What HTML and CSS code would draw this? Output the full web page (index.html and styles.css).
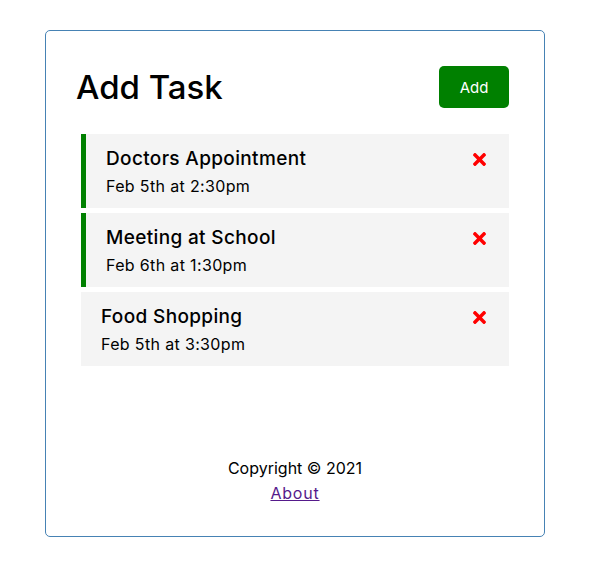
FILE: index.html
```html
<!DOCTYPE html>
<html lang="en">
<head>
<meta charset="utf-8">
<title>Task Tracker</title>
<link rel="stylesheet" href="styles.css">
</head>
<body>
<div class="container">
  <header class="header">
    <h1>Add Task</h1>
    <button class="btn">Add</button>
  </header>
  <div class="tasks">
    <div class="task reminder">
      <h3>Doctors Appointment <svg class="del" viewBox="0 0 352 512"><path d="M242.72 256l100.07-100.07c12.28-12.28 12.28-32.19 0-44.48l-22.24-22.24c-12.28-12.28-32.19-12.28-44.48 0L176 189.28 75.930 89.21c-12.28-12.28-32.19-12.28-44.48 0L9.21 111.45c-12.28 12.28-12.28 32.19 0 44.48L109.28 256 9.21 356.07c-12.28 12.28-12.28 32.19 0 44.48l22.24 22.24c12.28 12.28 32.2 12.28 44.48 0L176 322.72l100.07 100.07c12.28 12.28 32.2 12.28 44.48 0l22.24-22.24c12.28-12.28 12.28-32.19 0-44.48L242.72 256z"/></svg></h3>
      <p>Feb 5th at 2:30pm</p>
    </div>
    <div class="task reminder">
      <h3>Meeting at School <svg class="del" viewBox="0 0 352 512"><path d="M242.72 256l100.07-100.07c12.28-12.28 12.28-32.19 0-44.48l-22.24-22.24c-12.28-12.28-32.19-12.28-44.48 0L176 189.28 75.930 89.21c-12.28-12.28-32.19-12.28-44.48 0L9.21 111.45c-12.28 12.28-12.28 32.19 0 44.48L109.28 256 9.21 356.07c-12.28 12.28-12.28 32.19 0 44.48l22.24 22.24c12.28 12.28 32.2 12.28 44.48 0L176 322.72l100.07 100.07c12.28 12.28 32.2 12.28 44.48 0l22.24-22.24c12.28-12.28 12.28-32.19 0-44.48L242.72 256z"/></svg></h3>
      <p>Feb 6th at 1:30pm</p>
    </div>
    <div class="task">
      <h3>Food Shopping <svg class="del" viewBox="0 0 352 512"><path d="M242.72 256l100.07-100.07c12.28-12.28 12.28-32.19 0-44.48l-22.24-22.24c-12.28-12.28-32.19-12.28-44.48 0L176 189.28 75.930 89.21c-12.28-12.28-32.19-12.28-44.48 0L9.21 111.45c-12.28 12.28-12.28 32.19 0 44.48L109.28 256 9.21 356.07c-12.28 12.28-12.28 32.19 0 44.48l22.24 22.24c12.28 12.28 32.2 12.28 44.48 0L176 322.72l100.07 100.07c12.28 12.28 32.2 12.28 44.48 0l22.24-22.24c12.28-12.28 12.28-32.19 0-44.48L242.72 256z"/></svg></h3>
      <p>Feb 5th at 3:30pm</p>
    </div>
  </div>
  <footer class="footer">
    <p>Copyright © 2021</p>
    <a href="#about" class="about">About</a>
  </footer>
</div>
</body>
</html>
```

FILE: styles.css
```css
* {
  box-sizing: border-box;
  margin: 0;
  padding: 0;
}

body {
  font-family: Inter, "Open Sans", sans-serif;
  background: #fff;
  color: #000;
}

.container {
  width: 500px;
  height: 507px;
  margin: 30px 0 0 45px;
  padding: 30px;
  border: 1px solid steelblue;
  border-radius: 5px;
}

.header {
  display: flex;
  justify-content: space-between;
  align-items: center;
}

.header h1 {
  font-size: 33px;
  font-weight: 500;
  line-height: 48px;
}

.btn {
  background: #008000;
  color: #fff;
  border: none;
  width: 70px;
  height: 42px;
  margin: 5px;
  border-radius: 5px;
  font-family: inherit;
  font-size: 15px;
}

.tasks {
  display: flex;
  flex-direction: column;
  gap: 5px;
  margin-top: 21px;
}

.task {
  background: #f4f4f4;
  margin: 0 5px;
  padding: 10px 20px;
  height: 74px;
}

.task.reminder {
  border-left: 5px solid green;
}

.task h3 {
  display: flex;
  justify-content: space-between;
  align-items: center;
  font-size: 19px;
  font-weight: 500;
  line-height: 30px;
  letter-spacing: 0.35px;
}

.task p {
  font-size: 16px;
  line-height: 24px;
  letter-spacing: 0.35px;
}

.del {
  width: 13px;
  height: 19px;
  fill: red;
  margin-right: 3px;
}

.footer {
  margin-top: 90px;
  text-align: center;
  font-size: 16px;
  line-height: 24px;
}

.footer p {
  line-height: 25px;
}

.about {
  color: #551a8b;
  text-decoration: underline;
  letter-spacing: 0.8px;
}
```
